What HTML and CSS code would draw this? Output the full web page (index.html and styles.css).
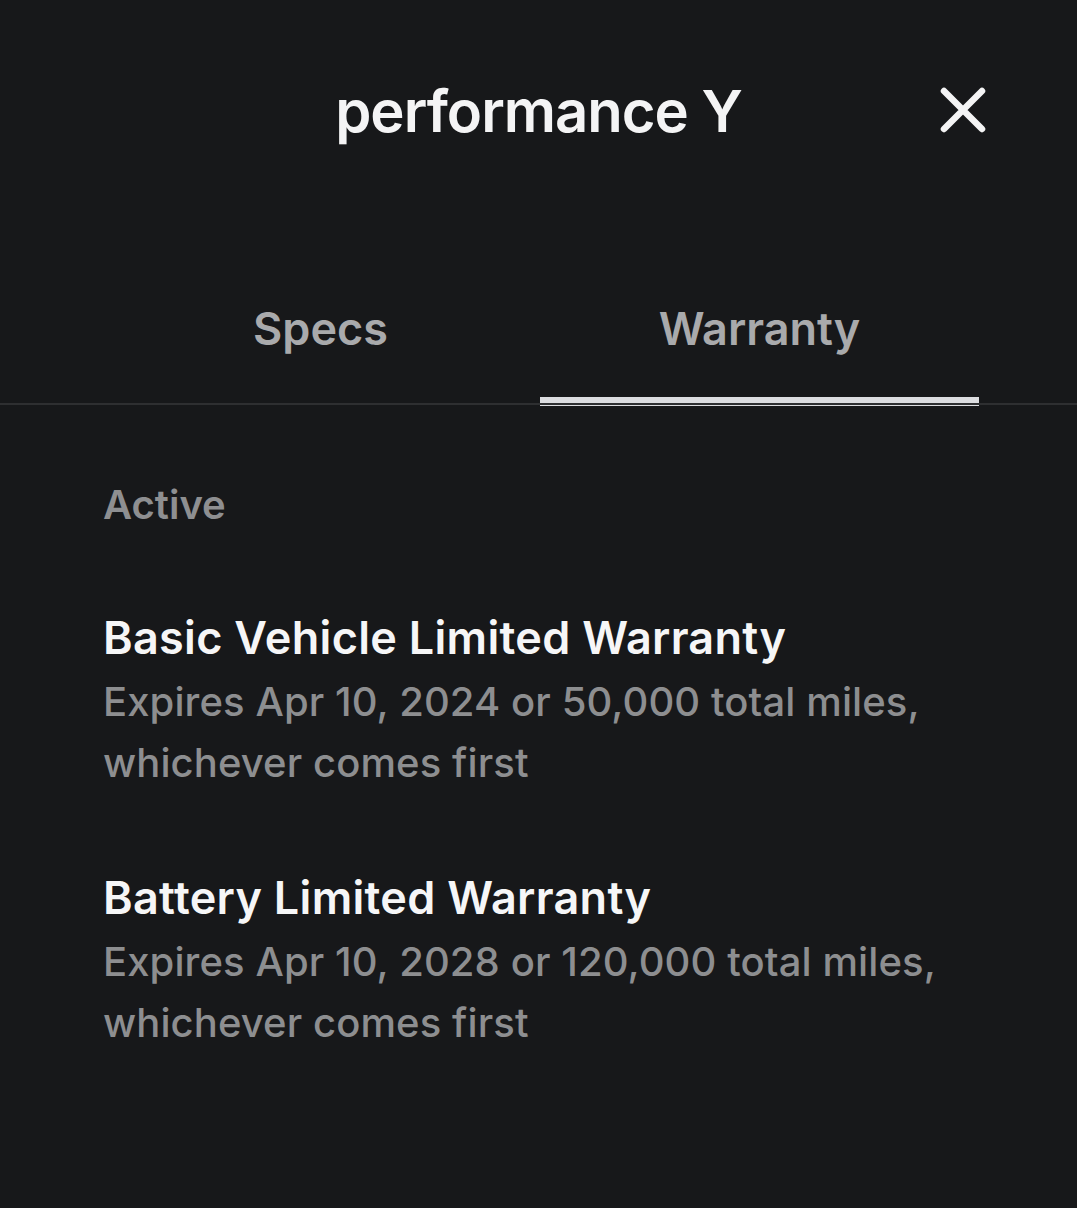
FILE: index.html
```html
<!DOCTYPE html>
<html lang="en">
<head>
<meta charset="utf-8">
<title>performance Y</title>
<link rel="stylesheet" href="styles.css">
</head>
<body>
<div class="page">
  <header class="header">
    <div class="spacer"></div>
    <h1 class="title">performance Y</h1>
    <button class="close" aria-label="Close">
      <svg width="46" height="46" viewBox="0 0 46 46"><path d="M4 4 L42 42 M42 4 L4 42" stroke="#f4f4f5" stroke-width="6.5" stroke-linecap="round" fill="none"/></svg>
    </button>
  </header>
  <nav class="tabs-wrap">
    <div class="tabs">
      <div class="tab">Specs</div>
      <div class="tab active">Warranty</div>
    </div>
  </nav>
  <main class="content">
    <div class="section-label">Active</div>
    <div class="item">
      <div class="item-title">Basic Vehicle Limited Warranty</div>
      <div class="item-desc">Expires Apr 10, 2024 or 50,000 total miles, whichever comes first</div>
    </div>
    <div class="item">
      <div class="item-title">Battery Limited Warranty</div>
      <div class="item-desc">Expires Apr 10, 2028 or 120,000 total miles, whichever comes first</div>
    </div>
  </main>
</div>
</body>
</html>
```

FILE: styles.css
```css
html, body {
  margin: 0;
  padding: 0;
  background: #17181a;
}
body {
  font-family: Inter, "Noto Sans", "Liberation Sans", sans-serif;
  color: #f4f4f5;
  width: 1077px;
  min-height: 1208px;
}
.page {
  display: flex;
  flex-direction: column;
}
.header {
  display: grid;
  grid-template-columns: 1fr auto 1fr;
  align-items: center;
  padding-top: 76px;
}
.title {
  margin: 0;
  font-size: 58px;
  line-height: 70px;
  font-weight: 600;
  color: #f4f4f5;
  letter-spacing: -1px;
}
.close {
  justify-self: end;
  margin-right: 91px;
  width: 46px;
  height: 46px;
  padding: 0;
  border: none;
  background: transparent;
  display: flex;
  align-items: center;
  justify-content: center;
  margin-top: -2px;
}
.tabs-wrap {
  margin-top: 155px;
  border-bottom: 2px solid #2e2f31;
  padding: 0 98px 0 101px;
}
.tabs {
  display: grid;
  grid-template-columns: 1fr 1fr;
}
.tab {
  position: relative;
  text-align: center;
  font-size: 45px;
  line-height: 56px;
  font-weight: 600;
  color: #a9aaac;
  padding-bottom: 46px;
}
.tab.active::after {
  content: "";
  position: absolute;
  left: 0;
  right: 0;
  bottom: -3px;
  height: 9px;
  background: linear-gradient(#dcdde0 0 6px, transparent 6px 8px, #dcdde0 8px 9px);
}
.content {
  padding: 76px 98px 0 103px;
}
.section-label {
  font-size: 40px;
  line-height: 48px;
  font-weight: 600;
  color: #8e8f91;
  margin-bottom: 82px;
}
.item {
  margin-bottom: 78px;
}
.item-title {
  font-size: 45px;
  line-height: 54px;
  font-weight: 600;
  color: #f6f6f7;
  letter-spacing: 0.3px;
  margin-bottom: 6px;
}
.item-desc {
  font-size: 40px;
  line-height: 61px;
  font-weight: 500;
  color: #8d8e90;
  letter-spacing: 0.1px;
  max-width: 860px;
}
```
